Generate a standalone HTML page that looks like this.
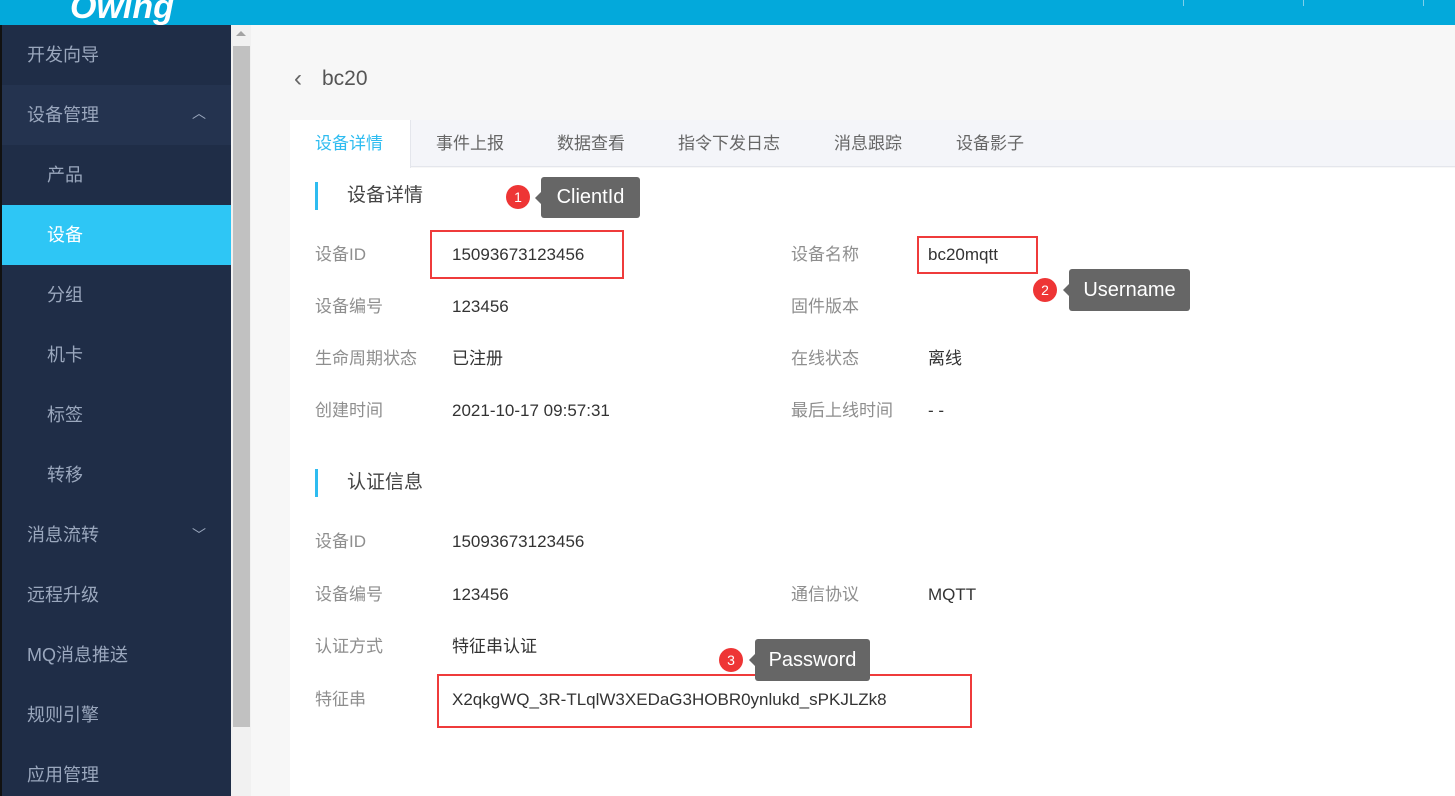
<!DOCTYPE html>
<html><head><meta charset="utf-8"><style>
*{margin:0;padding:0;box-sizing:border-box}
html,body{width:1455px;height:796px;overflow:hidden}
body{background:#f7f7f7;font-family:"Liberation Sans","Noto Sans CJK SC",sans-serif;position:relative}
.a{position:absolute;white-space:nowrap;line-height:22px}
.hd{left:0;top:0;width:1455px;height:25px;background:#03a9db}
.sb{left:0;top:25px;width:231px;height:771px;background:#1f2d47;border-left:2px solid #111}
.mi{position:absolute;left:0;width:229px;height:60px;line-height:60px;color:#9aa7bd;font-size:18px;padding-left:25px}
.sub{padding-left:45px}
.l{color:#8e8e8e;font-size:17px}
.v{color:#333;font-size:17px}
.box{border:2px solid #ef3b3b}
.tip{background:#666;color:#fff;font-size:20px;border-radius:3px;text-align:center}
.tip:before{content:"";position:absolute;left:-6px;top:50%;margin-top:-6px;border-top:6px solid transparent;border-bottom:6px solid transparent;border-right:6px solid #666}
.bd{width:24px;height:24px;border-radius:50%;background:#ee3535;color:#fff;font-size:14px;text-align:center;line-height:24px}
.tab{position:absolute;top:120px;height:47px;line-height:48px;font-size:17px;color:#666}
</style></head><body>
<div class="a hd"></div>
<div class="a" style="left:70px;top:-10px;color:#fff;font-size:34px;line-height:34px;font-style:italic;font-weight:bold">Owing</div>
<div class="a" style="left:1183px;top:0;width:1px;height:6px;background:#7fd0ea"></div>
<div class="a" style="left:1303px;top:0;width:1px;height:6px;background:#7fd0ea"></div>
<div class="a" style="left:1423px;top:0;width:1px;height:6px;background:#7fd0ea"></div>
<div class="a sb">
<div class="mi" style="top:0">开发向导</div>
<div class="mi" style="top:60px;background:#24334f">设备管理<span style="position:absolute;left:190px;top:-2px;font-size:14px">︿</span></div>
<div class="mi sub" style="top:120px">产品</div>
<div class="mi sub" style="top:180px;background:#2ec6f5;color:#fff">设备</div>
<div class="mi sub" style="top:240px">分组</div>
<div class="mi sub" style="top:300px">机卡</div>
<div class="mi sub" style="top:360px">标签</div>
<div class="mi sub" style="top:420px">转移</div>
<div class="mi" style="top:480px">消息流转<span style="position:absolute;left:190px;top:0;font-size:14px">﹀</span></div>
<div class="mi" style="top:540px">远程升级</div>
<div class="mi" style="top:600px">MQ消息推送</div>
<div class="mi" style="top:660px">规则引擎</div>
<div class="mi" style="top:720px">应用管理</div>
</div>
<div class="a" style="left:231px;top:25px;width:20px;height:771px;background:#f1f1f1"></div>
<div class="a" style="left:233px;top:46px;width:17px;height:681px;background:#c1c1c1"></div>
<div class="a" style="left:236px;top:31px;border-left:5px solid transparent;border-right:5px solid transparent;border-bottom:5px solid #a3a3a3"></div>

<div class="a" style="left:294px;top:66px;color:#666;font-size:24px;line-height:26px">‹</div>
<div class="a" style="left:322px;top:68px;color:#555;font-size:21px">bc20</div>

<div class="a" style="left:290px;top:120px;width:1165px;height:47px;background:#f4f5f9;border-bottom:1px solid #e4e6ec"></div>
<div class="a" style="left:290px;top:120px;width:121px;height:48px;background:#fff;border-right:1px solid #e4e6ec"></div>
<div class="a" style="left:290px;top:168px;width:1165px;height:628px;background:#fff"></div>
<div class="tab" style="left:315px;color:#2ebcf0">设备详情</div>
<div class="tab" style="left:436px">事件上报</div>
<div class="tab" style="left:557px">数据查看</div>
<div class="tab" style="left:678px">指令下发日志</div>
<div class="tab" style="left:834px">消息跟踪</div>
<div class="tab" style="left:956px">设备影子</div>

<div class="a" style="left:315px;top:182px;width:3px;height:28px;background:#2ebcf0"></div>
<div class="a" style="left:347px;top:185px;font-size:19px;color:#444">设备详情</div>
<div class="a l" style="left:315px;top:244px">设备ID</div><div class="a v" style="left:452px;top:244px">15093673123456</div>
<div class="a l" style="left:791px;top:244px">设备名称</div><div class="a v" style="left:928px;top:244px">bc20mqtt</div>
<div class="a l" style="left:315px;top:296px">设备编号</div><div class="a v" style="left:452px;top:296px">123456</div>
<div class="a l" style="left:791px;top:296px">固件版本</div>
<div class="a l" style="left:315px;top:348px">生命周期状态</div><div class="a v" style="left:452px;top:348px">已注册</div>
<div class="a l" style="left:791px;top:348px">在线状态</div><div class="a v" style="left:928px;top:348px">离线</div>
<div class="a l" style="left:315px;top:400px">创建时间</div><div class="a v" style="left:452px;top:400px">2021-10-17 09:57:31</div>
<div class="a l" style="left:791px;top:400px">最后上线时间</div><div class="a v" style="left:928px;top:400px">- -</div>

<div class="a" style="left:315px;top:469px;width:3px;height:28px;background:#2ebcf0"></div>
<div class="a" style="left:347px;top:472px;font-size:19px;color:#444">认证信息</div>
<div class="a l" style="left:315px;top:531px">设备ID</div><div class="a v" style="left:452px;top:531px">15093673123456</div>
<div class="a l" style="left:315px;top:584px">设备编号</div><div class="a v" style="left:452px;top:584px">123456</div>
<div class="a l" style="left:791px;top:584px">通信协议</div><div class="a v" style="left:928px;top:584px">MQTT</div>
<div class="a l" style="left:315px;top:636px">认证方式</div><div class="a v" style="left:452px;top:636px">特征串认证</div>
<div class="a l" style="left:315px;top:689px">特征串</div><div class="a v" style="left:452px;top:689px">X2qkgWQ_3R-TLqlW3XEDaG3HOBR0ynlukd_sPKJLZk8</div>

<div class="a box" style="left:430px;top:230px;width:194px;height:49px"></div>
<div class="a box" style="left:917px;top:236px;width:121px;height:38px"></div>
<div class="a box" style="left:437px;top:674px;width:535px;height:54px"></div>

<div class="a bd" style="left:506px;top:185px;line-height:24px">1</div>
<div class="a tip" style="left:541px;top:177px;width:99px;height:41px;line-height:41px">ClientId</div>
<div class="a bd" style="left:1033px;top:278px;line-height:24px">2</div>
<div class="a tip" style="left:1069px;top:269px;width:121px;height:42px;line-height:42px">Username</div>
<div class="a bd" style="left:719px;top:648px;line-height:24px">3</div>
<div class="a tip" style="left:755px;top:639px;width:115px;height:42px;line-height:42px">Password</div>
</body></html>
